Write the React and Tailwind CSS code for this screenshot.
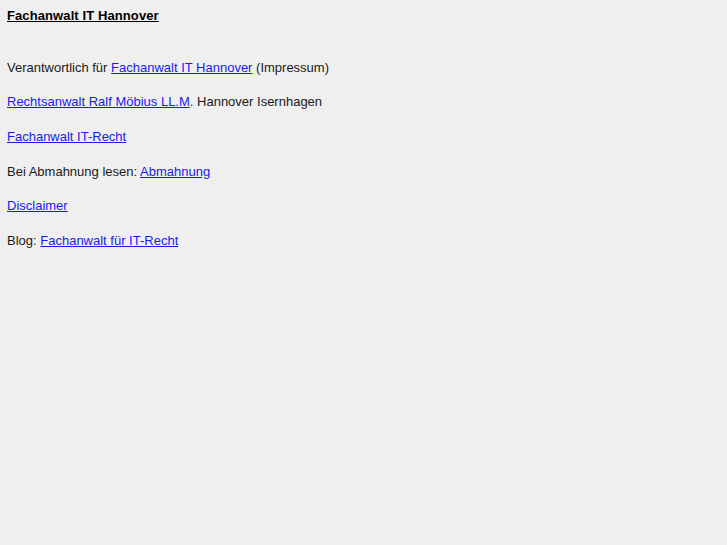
export default function App() {
  const link = "text-[#1a1aee] underline";
  return (
    <div className="min-h-[545px] bg-[#efefef] px-[7px] pt-[7px] text-[13px] leading-[17.3px] text-[#1a1a1a] [font-family:'Liberation_Sans',Arial,sans-serif]">
      <div className="font-bold tracking-[0.1px] text-black underline">Fachanwalt IT Hannover</div>
      <div className="mt-[34.6px] flex flex-col gap-[17.3px]">
        <div>
          Verantwortlich für <a className={link}>Fachanwalt IT Hannover</a> (Impressum)
        </div>
        <div>
          <a className={link}>Rechtsanwalt Ralf Möbius LL.M</a>. Hannover Isernhagen
        </div>
        <div>
          <a className={link}>Fachanwalt IT-Recht</a>
        </div>
        <div>
          Bei Abmahnung lesen: <a className={link}>Abmahnung</a>
        </div>
        <div>
          <a className={link}>Disclaimer</a>
        </div>
        <div>
          Blog: <a className={link}>Fachanwalt für IT-Recht</a>
        </div>
      </div>
    </div>
  );
}
